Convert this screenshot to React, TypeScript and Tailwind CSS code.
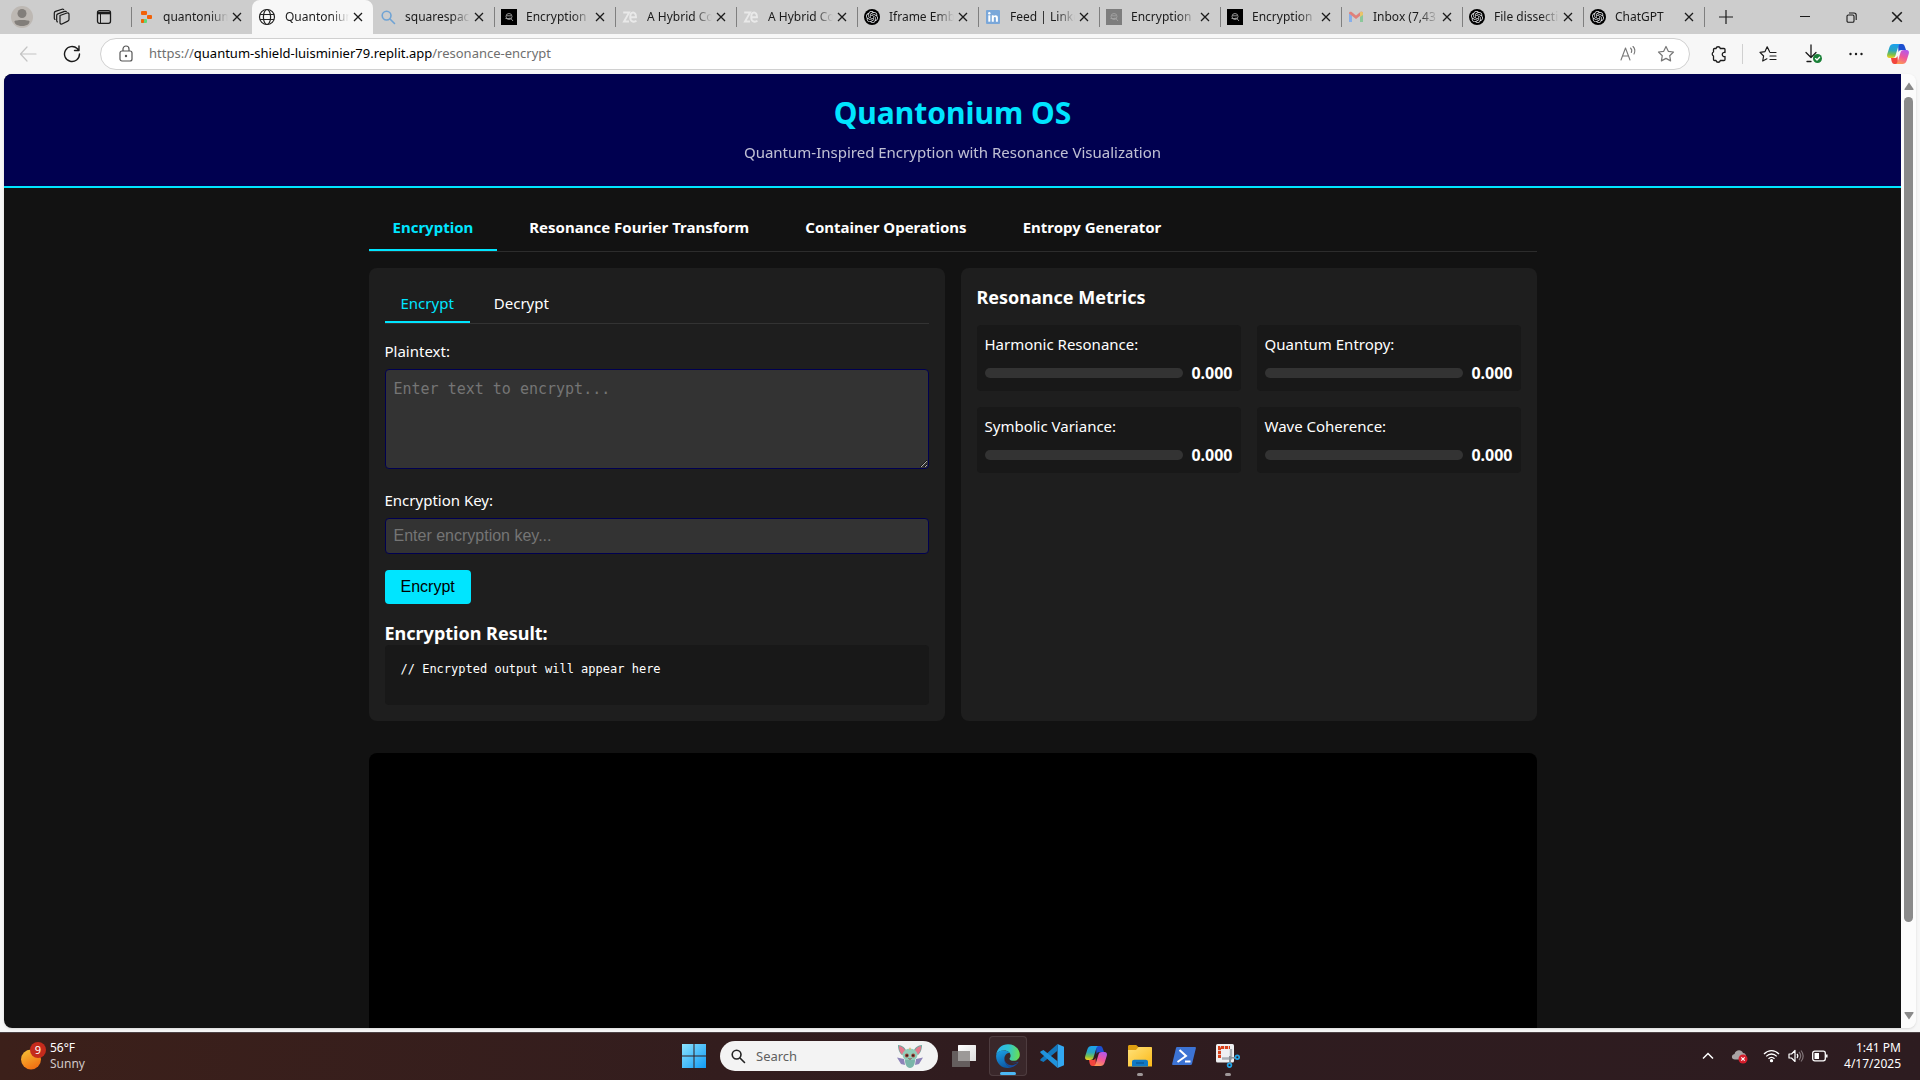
import { useId, useState, type ReactNode } from "react";
import { SiOpenai } from "react-icons/si";

type IconProps = { className?: string };

function OpenAiIcon() {
  return (
    <span className="flex size-4 items-center justify-center rounded-full bg-black text-gray-200">
      <SiOpenai className="size-3" />
    </span>
  );
}

function ReplitIcon() {
  return (
    <svg viewBox="0 0 16 16" className="size-4">
      <rect x="3" y="2" width="6" height="4" rx="1" fill="#f26207" />
      <rect x="9" y="6" width="5" height="4" rx="1" fill="#f26207" />
      <rect x="3" y="10" width="6" height="4" rx="1" fill="#5fd87a" />
      <rect x="3" y="10" width="3" height="4" rx="1" fill="#f26207" />
    </svg>
  );
}

function GlobeIcon() {
  return (
    <svg viewBox="0 0 18 18" className="size-[18px]" fill="none" stroke="#222" strokeWidth="1.2">
      <circle cx="9" cy="9" r="7.5" />
      <ellipse cx="9" cy="9" rx="3.6" ry="7.5" />
      <path d="M2 6.5h14M2 11.5h14" />
    </svg>
  );
}

function SearchIcon({ className = "size-4 text-[#6fa3d4]" }: IconProps) {
  return (
    <svg viewBox="0 0 16 16" className={className} fill="none" stroke="currentColor" strokeWidth="1.6" strokeLinecap="round">
      <circle cx="6.6" cy="6.6" r="4.4" />
      <path d="m10 10 4.5 4.5" />
    </svg>
  );
}

function QIcon({ className }: IconProps) {
  return (
    <svg viewBox="0 0 16 16" className={className}>
      <rect width="16" height="16" fill="currentColor" />
      <g fill="none" stroke="#a3a3a3" strokeWidth="0.9">
        <circle cx="8" cy="7.5" r="3" />
        <path d="M4.5 9.5h5M9 8.5l3 3.5M5.5 6.8h4.5" />
      </g>
    </svg>
  );
}

function ZeIcon() {
  return (
    <svg viewBox="0 0 16 16" className="size-4" fill="none" stroke="#e9e9e9" strokeWidth="1.9">
      <path d="M1.2 3.500h6L2 12.500h5" />
      <path d="M8.600 8.200h5.400c0-6.500-5.800-6-5.800 0 0 5.200 4.500 5.200 6.200 3.400" />
    </svg>
  );
}

function LinkedInIcon() {
  return (
    <svg viewBox="0 0 16 16" className="size-4">
      <rect x="1" y="1" width="14" height="14" rx="1" fill="#7aa7d9" />
      <g fill="#fff">
        <circle cx="4.3" cy="4.3" r="1.2" />
        <rect x="3.3" y="6.3" width="2" height="6.4" />
        <path d="M6.800 6.300h1.900v.9c1-1.500 4.200-1.400 4.200 1.500v4h-2V9.300c0-1.800-2.100-1.600-2.100 0v3.400h-2z" />
      </g>
    </svg>
  );
}

function GmailIcon() {
  return (
    <svg viewBox="0 0 16 16" className="size-4">
      <path d="M1 4v9h3V6.500z" fill="#86aeea" />
      <path d="M15 4v9h-3V6.500z" fill="#8bc79a" />
      <path d="M1 4.500C1 2.600 3 2.600 4 3.300l4 3.200 4-3.200c1-.7 3-.7 3 1.200L8 10z" fill="#e0807a" />
      <path d="M12 3.300c1-.7 3-.7 3 1.200V6l-3 2z" fill="#e9c46a" />
    </svg>
  );
}

function CopilotIcon({ className }: IconProps) {
  const id = useId();
  return (
    <svg viewBox="0 0 24 24" className={className}>
      <defs>
        <linearGradient id={`${id}a`} x1="0.4" y1="0" x2="0.3" y2="1">
          <stop offset="0" stopColor="#1ba0ee" />
          <stop offset="0.45" stopColor="#2aa6c0" />
          <stop offset="0.75" stopColor="#7cc04a" />
          <stop offset="1" stopColor="#f4d020" />
        </linearGradient>
        <linearGradient id={`${id}b`} x1="0.7" y1="0" x2="0.3" y2="1">
          <stop offset="0" stopColor="#b457ec" />
          <stop offset="0.5" stopColor="#f0569a" />
          <stop offset="1" stopColor="#fd9a52" />
        </linearGradient>
      </defs>
      <path d="M12 2h4c1.800 0 2.400 1.200 2.900 2.800L20 8h-4.500c-1.800 0-2.500.7-3 2.300z" fill="#1c4fd0" />
      <path d="M12 22H8.500c-1.800 0-2.400-1.200-2.900-2.800L5 16h3.500c1.800 0 2.500-.7 3-2.300z" fill="#f2453d" />
      <path d="M7.500 2h7c-1.300.3-1.900 1.300-2.400 3L9.500 13.500C9 15.200 8 16 6 16H3.500C1.500 16 .6 14.400 1.200 12.200L3.500 5C4.200 2.900 5.500 2 7.500 2z" fill={`url(#${id}a)`} />
      <path d="M16.500 22h-7c1.300-.3 1.900-1.300 2.400-3l2.600-8.500C15 8.800 16 8 18 8h2.500c2 0 2.900 1.600 2.300 3.800L20.500 19c-.7 2.100-2 3-4 3z" fill={`url(#${id}b)`} />
    </svg>
  );
}

function CloseGlyph({ className = "size-[10px]" }: IconProps) {
  return (
    <svg viewBox="0 0 10 10" className={className} fill="none" stroke="#1b1b1b" strokeWidth="1.3">
      <path d="m1 1 8 8M9 1 1 9" />
    </svg>
  );
}

type BrowserTab = { title: string; icon: ReactNode; active?: boolean };

const browserTabs: BrowserTab[] = [
  { title: "quantonium", icon: <ReplitIcon /> },
  { title: "Quantonium", icon: <GlobeIcon />, active: true },
  { title: "squarespac", icon: <SearchIcon /> },
  { title: "Encryption", icon: <QIcon className="size-4 text-black" /> },
  { title: "A Hybrid Co", icon: <ZeIcon /> },
  { title: "A Hybrid Co", icon: <ZeIcon /> },
  { title: "Iframe Emb", icon: <OpenAiIcon /> },
  { title: "Feed | Linke", icon: <LinkedInIcon /> },
  { title: "Encryption", icon: <QIcon className="size-4 text-[#7d7d7d]" /> },
  { title: "Encryption", icon: <QIcon className="size-4 text-black" /> },
  { title: "Inbox (7,43", icon: <GmailIcon /> },
  { title: "File dissecti", icon: <OpenAiIcon /> },
  { title: "ChatGPT", icon: <OpenAiIcon /> },
];

function TabStrip() {
  return (
    <div className="flex h-[34px] items-stretch bg-[#cdcdcd] text-xs text-[#1b1b1b]">
      <div className="flex w-[131px] shrink-0 items-center pl-[11px]">
        <button aria-label="Profile" className="size-[22px]">
          <svg viewBox="0 0 22 22">
            <circle cx="11" cy="11" r="11" fill="#bdb8b3" />
            <circle cx="11" cy="7.5" r="4.5" fill="#827e7a" />
            <path d="M3.500 15.500c0-2 15-2 15 0 0 6-15 6-15 0z" fill="#827e7a" />
          </svg>
        </button>
        <button aria-label="Workspaces" className="ml-5">
          <svg viewBox="0 0 18 18" className="size-[18px]" fill="none" stroke="#1b1b1b" strokeWidth="1.2" strokeLinejoin="round">
            <path d="m7 7.500 7-2.500c1-.3 2 .2 2 1.200v5.300c0 .8-.4 1.300-1.200 1.600L9 16c-1 .3-2-.2-2-1.200z" />
            <path d="M5 14c-.8 0-1.300-.5-1.300-1.300V7.500c0-.8.400-1.300 1.200-1.600l6.600-2.500c1-.3 1.800 0 2 .8" />
            <path d="M2.500 11.500c-.8 0-1.200-.5-1.200-1.300V5c0-.8.400-1.300 1.200-1.600L9 1.200c.9-.3 1.700 0 1.900.8" />
          </svg>
        </button>
        <button aria-label="Tab actions" className="ml-[25px]">
          <svg viewBox="0 0 16 16" className="size-4" fill="none" stroke="#1b1b1b" strokeWidth="1.3">
            <rect x="1.5" y="1.7" width="13" height="12.6" rx="2" />
            <path d="M1.500 4h13" strokeWidth="2.6" />
            <path d="M4.500 4v10" strokeWidth="1" />
          </svg>
        </button>
      </div>
      <div role="tablist" aria-label="Open tabs" className="flex min-w-0 shrink">
        {browserTabs.map((tab, i) => (
          <div
            key={i}
            className={
              tab.active
                ? "flex w-[121px] min-w-0 items-center rounded-t-lg bg-[#f7f7f7] pr-[10px] pl-[6px]"
                : "flex w-[121px] min-w-0 items-center pr-[10px]"
            }
          >
            {!tab.active && (
              <span className={i === 2 ? "h-5 w-px shrink-0" : "h-5 w-px shrink-0 bg-[#7f7f7f]"} />
            )}
            <button role="tab" aria-selected={!!tab.active} className="flex min-w-0 flex-1 items-center text-left">
              <span className={tab.active ? "shrink-0" : "ml-[6px] shrink-0"}>{tab.icon}</span>
              <span className="ml-[9px] min-w-0 flex-1 overflow-hidden whitespace-nowrap [mask-image:linear-gradient(to_right,black_72%,transparent)]">
                {tab.title}
              </span>
            </button>
            <button aria-label={`Close ${tab.title}`} className="ml-1 shrink-0">
              <CloseGlyph />
            </button>
          </div>
        ))}
      </div>
      <span className="h-5 w-px shrink-0 self-center bg-[#7f7f7f]" />
      <button aria-label="New tab" className="ml-[14px] shrink-0">
        <svg viewBox="0 0 14 14" className="size-[14px]" stroke="#1b1b1b" strokeWidth="1.2">
          <path d="M7 0v14M0 7h14" />
        </svg>
      </button>
      <div className="ml-auto flex shrink-0">
        <button aria-label="Minimize" className="flex w-[46px] items-center justify-center">
          <svg viewBox="0 0 10 10" className="size-[10px]" stroke="#1b1b1b">
            <path d="M0 4.500h10" />
          </svg>
        </button>
        <button aria-label="Restore" className="flex w-[46px] items-center justify-center">
          <svg viewBox="0 0 11 11" className="size-[11px]" fill="none" stroke="#1b1b1b" strokeWidth="1.1">
            <rect x="1" y="3" width="7" height="7.2" rx="1.3" />
            <path d="M3 1h5c1.300 0 2.200.9 2.200 2.200V8" />
          </svg>
        </button>
        <button aria-label="Close window" className="flex w-[46px] items-center justify-center">
          <CloseGlyph className="size-3" />
        </button>
      </div>
    </div>
  );
}

function StarIcon({ className, lines }: IconProps & { lines?: boolean }) {
  return (
    <svg viewBox="0 0 18 18" className={className} fill="none" stroke="currentColor" strokeWidth="1.2" strokeLinejoin="round" strokeLinecap="round">
      {lines ? (
        <>
          <path d="m10.500 6.500-2.300-4.700L6 6.600l-5 .7L4.600 11l-.9 5 4.200-2.200" />
          <path d="M11 7.500h6M11 11h6M11 14.500h6" />
        </>
      ) : (
        <path d="m9 1.500 2.300 4.800 5.200.7-3.800 3.700.9 5.200L9 13.400l-4.600 2.500.9-5.200L1.500 7l5.200-.7z" />
      )}
    </svg>
  );
}

function AddressRow() {
  return (
    <div className="flex h-10 items-center bg-[#f7f7f7] text-[#1b1b1b]">
      <button aria-label="Back" className="ml-[19px] text-[#c4c4c4]">
        <svg viewBox="0 0 18 18" className="size-[18px]" fill="none" stroke="currentColor" strokeWidth="1.2" strokeLinecap="round" strokeLinejoin="round">
          <path d="M17 9H1.500M8 2 1.500 9 8 16" />
        </svg>
      </button>
      <button aria-label="Refresh" className="ml-[26px]">
        <svg viewBox="0 0 18 18" className="size-[18px]" fill="none" stroke="currentColor" strokeWidth="1.4" strokeLinecap="round" strokeLinejoin="round">
          <path d="M16.500 9a7.500 7.500 0 1 1-2.300-5.400L16 5.500M16 1v4.500h-4.500" />
        </svg>
      </button>
      <div className="ml-[19px] flex h-8 min-w-0 flex-1 items-center rounded-full border border-[#d0d0d0] bg-white pr-3 pl-[18px]">
        <svg viewBox="0 0 14 18" className="h-[18px] w-[14px] shrink-0" fill="none" stroke="#555" strokeWidth="1.2">
          <rect x="1" y="6" width="12" height="10" rx="2" />
          <path d="M4 6V4a3 3 0 0 1 6 0v2" />
          <circle cx="7" cy="11" r="0.6" fill="#555" />
        </svg>
        <p className="ml-4 min-w-0 flex-1 truncate text-[13px] text-[#6f6f6f]">
          https://<span className="text-black">quantum-shield-luisminier79.replit.app</span>/resonance-encrypt
        </p>
        <button aria-label="Read aloud" className="ml-4 text-[#777]">
          <svg viewBox="0 0 18 18" className="size-[18px]" fill="none" stroke="currentColor" strokeWidth="1.1" strokeLinecap="round" strokeLinejoin="round">
            <path d="m2 15 4.500-12L11 15M3.500 11h6M11.500 3c1.300 1.200 1.500 3 .8 4.500M14 1.500c2 2 2.200 5 1 7.500" />
          </svg>
        </button>
        <button aria-label="Add to favorites" className="mr-[2px] ml-5 text-[#777]">
          <StarIcon className="size-[18px]" />
        </button>
      </div>
      <button aria-label="Extensions" className="ml-5">
        <svg viewBox="0 0 18 18" className="size-[18px]" fill="none" stroke="currentColor" strokeWidth="1.3" strokeLinejoin="round">
          <path d="M6 3.500a2.200 2.200 0 0 1 4.300 0H14c.6 0 1 .4 1 1v3a2.100 2.100 0 1 0 0 4v3c0 .6-.4 1-1 1h-3.700a2.200 2.200 0 0 1-4.300 0H4.500c-.6 0-1-.4-1-1V11a2.200 2.200 0 0 1 0-4V4.500c0-.6.4-1 1-1z" />
        </svg>
      </button>
      <span className="ml-[14px] h-5 w-px bg-[#d0d0d0]" />
      <button aria-label="Favorites" className="ml-4">
        <StarIcon className="size-[18px]" lines />
      </button>
      <button aria-label="Downloads" className="ml-[26px]">
        <svg viewBox="0 0 20 20" className="size-5" fill="none" stroke="currentColor" strokeWidth="1.3" strokeLinecap="round" strokeLinejoin="round">
          <path d="M8 1v12M3 8.500l5 5 5-5M4 17.500h4" />
          <circle cx="14.5" cy="14.5" r="4.5" fill="#1a8038" stroke="none" />
          <path d="m12.500 14.600 1.500 1.400 2.600-2.800" stroke="#fff" />
        </svg>
      </button>
      <button aria-label="Settings and more" className="ml-6">
        <svg viewBox="0 0 18 18" className="size-[18px]" fill="currentColor">
          <circle cx="3.5" cy="9" r="1.2" />
          <circle cx="9" cy="9" r="1.2" />
          <circle cx="14.5" cy="9" r="1.2" />
        </svg>
      </button>
      <button aria-label="Copilot" className="mr-[10px] ml-[21px]">
        <CopilotIcon className="size-6" />
      </button>
    </div>
  );
}

const sections = ["Encryption", "Resonance Fourier Transform", "Container Operations", "Entropy Generator"];
const metrics = ["Harmonic Resonance:", "Quantum Entropy:", "Symbolic Variance:", "Wave Coherence:"];

function EncryptionPanel() {
  const [mode, setMode] = useState("Encrypt");
  return (
    <section className="rounded-lg bg-[#1e1e1e] p-4">
      <div role="tablist" className="flex gap-2 border-b border-[#333]">
        {["Encrypt", "Decrypt"].map((name) => (
          <button
            key={name}
            role="tab"
            aria-selected={mode === name}
            onClick={() => setMode(name)}
            className={
              mode === name
                ? "h-[39px] border-b-2 border-[#00e5ff] px-4 pt-[2px] text-[#00e5ff]"
                : "h-[39px] border-b-2 border-transparent px-4 pt-[2px]"
            }
          >
            {name}
          </button>
        ))}
      </div>
      <label htmlFor="plaintext" className="mt-4 block leading-[22px]">
        Plaintext:
      </label>
      <textarea
        id="plaintext"
        placeholder="Enter text to encrypt..."
        className="mt-[7px] block h-[100px] w-full resize-y rounded-sm border border-[#000050] bg-[#333] px-2 py-[9px] font-[DejaVu_Sans_Mono,monospace] text-[15px] leading-5 text-white placeholder:text-[#757575]"
      />
      <label htmlFor="key" className="mt-5 block leading-[22px]">
        Encryption Key:
      </label>
      <input
        id="key"
        type="text"
        placeholder="Enter encryption key..."
        className="mt-[7px] block h-9 w-full rounded-sm border border-[#000050] bg-[#333] px-2 font-[Liberation_Sans,sans-serif] text-base text-white placeholder:text-[#757575]"
      />
      <button className="mt-4 h-[34px] rounded-sm bg-[#00e5ff] px-4 font-[Liberation_Sans,sans-serif] text-base text-black">
        Encrypt
      </button>
      <h2 className="mt-[18px] text-lg leading-[23px] font-bold">Encryption Result:</h2>
      <pre className="min-h-[60px] overflow-x-auto rounded-sm bg-[#181818] p-4 font-[DejaVu_Sans_Mono,monospace] text-xs leading-4">
        // Encrypted output will appear here
      </pre>
    </section>
  );
}

function MetricsPanel() {
  return (
    <section className="rounded-lg bg-[#1e1e1e] p-4">
      <h2 className="text-lg leading-[27px] font-bold">Resonance Metrics</h2>
      <div className="mt-[14px] grid grid-cols-2 gap-4">
        {metrics.map((name) => (
          <div key={name} className="rounded-sm bg-[#181818] p-2">
            <p className="leading-[22px]">{name}</p>
            <div className="mt-2 flex items-center gap-2">
              <div role="meter" aria-label={name} aria-valuenow={0} className="h-[10px] flex-1 rounded-full bg-[#333]" />
              <span className="text-base leading-5 font-bold">0.000</span>
            </div>
          </div>
        ))}
      </div>
    </section>
  );
}

function QuantoniumPage() {
  const [section, setSection] = useState("Encryption");
  return (
    <div className="min-w-0 flex-1 overflow-hidden bg-[#121212] text-[15px] text-white">
      <header className="border-b-2 border-[#00e5ff] bg-[#000050] px-4 pt-4 pb-[22px] text-center">
        <h1 className="text-[30px] leading-[46px] font-bold text-[#00e5ff]">Quantonium OS</h1>
        <p className="mt-1 leading-6 opacity-75">Quantum-Inspired Encryption with Resonance Visualization</p>
      </header>
      <main className="mx-auto max-w-[1200px] p-4">
        <nav role="tablist" className="flex gap-2 border-b border-[#2c2c2c]">
          {sections.map((name) => (
            <button
              key={name}
              role="tab"
              aria-selected={section === name}
              onClick={() => setSection(name)}
              className={
                section === name
                  ? "h-[47px] border-b-2 border-[#00e5ff] px-6 pt-[2px] font-bold text-[#00e5ff]"
                  : "h-[47px] border-b-2 border-transparent px-6 pt-[2px] font-bold"
              }
            >
              {name}
            </button>
          ))}
        </nav>
        <div className="mt-4 grid grid-cols-2 gap-4">
          <EncryptionPanel />
          <MetricsPanel />
        </div>
        <div className="mt-8 h-[400px] rounded-lg bg-black" />
      </main>
    </div>
  );
}

function Scrollbar() {
  return (
    <div className="flex w-[15px] shrink-0 flex-col items-center bg-[#fcfcfc] text-[#8a8a8a]">
      <svg viewBox="0 0 10 8" className="mt-2 h-2 w-[10px]" fill="currentColor">
        <path d="M5 .5 9.500 7c.2.600 0 1-.5 1H1C.5 8 .3 7.600.5 7z" />
      </svg>
      <div className="mt-[7px] h-[86.5%] w-[9px] rounded-full bg-[#8a8a8a]" />
      <svg viewBox="0 0 10 8" className="mt-auto mb-2 h-2 w-[10px]" fill="currentColor">
        <path d="M5 7.500.5 1C.3.400.5 0 1 0h8c.5 0 .7.400.5 1z" />
      </svg>
    </div>
  );
}

function WindowsIcon() {
  return (
    <svg viewBox="0 0 24 24" className="size-6">
      <defs>
        <linearGradient id="win" gradientUnits="userSpaceOnUse" x1="0" y1="0" x2="24" y2="24">
          <stop offset="0" stopColor="#8be3fd" />
          <stop offset="1" stopColor="#109bf5" />
        </linearGradient>
      </defs>
      <path d="M0 0h11.500v11.500H0zM12.500 0H24v11.500H12.500zM0 12.500h11.500V24H0zM12.500 12.500H24V24H12.500z" fill="url(#win)" />
    </svg>
  );
}

function CritterIcon() {
  return (
    <svg viewBox="0 0 26 24" className="h-6 w-[26px]">
      <path d="M7 15 0 13.500 4 20l4 1zM19 15l7-1.500-4 6.500-4 1z" fill="#8d83b8" />
      <path d="M1 1c4 0 8 3 8.500 7L5 11C2 9 1 4 1 1zM25 1c-4 0-8 3-8.500 7l4.500 3c3-2 4-7 4-10z" fill="#6fa69d" />
      <path d="M2 2C5 2.500 8 5 8.500 8l-3.500 2.500C2.500 8 2 5 2 2zM24 2c-3 .5-6 3-6.500 6l3.500 2.500C23.500 8 24 5 24 2z" fill="#e5788c" />
      <ellipse cx="13" cy="11" rx="7.5" ry="6.5" fill="#92cdb9" />
      <path d="M8 16h10c0 4-1.500 8-5 8s-5-4-5-8z" fill="#7ab5a8" />
      <circle cx="9.8" cy="11.5" r="1.9" fill="#a44438" />
      <circle cx="16.2" cy="11.5" r="1.9" fill="#a44438" />
      <circle cx="10" cy="11.5" r="0.9" fill="#281a1e" />
      <circle cx="16" cy="11.5" r="0.9" fill="#281a1e" />
      <path d="M11.500 14.500c1 .8 2 .8 3 0" fill="none" stroke="#8b3f45" />
      <path d="M12 5.500 13 3l1 2.500z" fill="#e1b25c" />
    </svg>
  );
}

function TaskViewIcon() {
  return (
    <svg viewBox="0 0 24 24" className="size-6">
      <defs>
        <linearGradient id="tv" x1="0" y1="0" x2="1" y2="1">
          <stop offset="0" stopColor="#fff" />
          <stop offset="1" stopColor="#dcdcdc" />
        </linearGradient>
      </defs>
      <rect x="6" y="1" width="18" height="16" rx="0.5" fill="url(#tv)" />
      <rect x="0" y="7" width="18" height="16" rx="0.5" fill="#6b6665" fillOpacity="0.9" />
      <path d="M6 7h12v10H6z" fill="#9c9998" />
    </svg>
  );
}

function EdgeIcon() {
  return (
    <svg viewBox="0 0 24 24" className="size-6">
      <defs>
        <linearGradient id="edgeTop" x1="0" y1="0.5" x2="1" y2="0.6">
          <stop offset="0" stopColor="#2bb4ee" />
          <stop offset="0.5" stopColor="#30c5cf" />
          <stop offset="1" stopColor="#6be04c" />
        </linearGradient>
        <linearGradient id="edgeBody" x1="0.2" y1="0" x2="0.5" y2="1">
          <stop offset="0" stopColor="#1b9de2" />
          <stop offset="1" stopColor="#0c59a4" />
        </linearGradient>
      </defs>
      <path d="M.2 10.500C1.200 4.200 6 .2 12 .2c6.800 0 11.800 4.800 11.800 10.500 0 3.600-2.700 6.100-6 6.100-2.800 0-4.300-1.100-4.300-2.100 0-.7 1.100-1.100 1.100-3C14.600 9 12 6.500 8.200 6.500c-3.700 0-6.800 1.600-8 4z" fill="url(#edgeTop)" />
      <path d="M.1 12C.300 8.300 4 6.400 8.200 6.500c2.200 0 4.400 1 5.400 2.300-3 .2-5.200 2.700-5.200 6 0 4.200 3 7.800 7.300 8.500C8 26 0 20.500.1 12z" fill="url(#edgeBody)" />
      <path d="M8.800 12.500c-1.200 5.500 3.200 9.700 8.700 8.500 1.900-.5 3.500-1.400 4.700-2.500.5-.5.200-.9-.5-.6-6.500 2.600-12-.4-12.900-5.400zm13.400 6C20.300 21.500 18 22.800 15.700 23.300 10 22.500 7.300 16.800 8.800 12.500c1 5 6.300 8 13.400 6z" fill="#174c9f" />
    </svg>
  );
}

function CodeIcon() {
  return (
    <svg viewBox="0 0 24 24" className="size-6">
      <path d="M17.500 0 24 2.800v18.400L17.500 24z" fill="#32a8f2" />
      <path d="M17.500 0v6.700L3.500 18 .8 16.800c-.7-.4-.7-1.300-.1-1.800z" fill="#1277bd" />
      <path d="M17.500 24v-6.700L3.500 6 .8 7.200c-.7.4-.7 1.300-.1 1.800z" fill="#2093dc" />
    </svg>
  );
}

function FolderIcon() {
  return (
    <svg viewBox="0 0 24 24" className="size-6">
      <defs>
        <linearGradient id="folder" x1="0" y1="0" x2="1" y2="1">
          <stop offset="0" stopColor="#ffe27a" />
          <stop offset="1" stopColor="#fbb919" />
        </linearGradient>
      </defs>
      <path d="M0 2.500C0 1.600.6 1 1.500 1h6.700L11 3.500h12V10H0z" fill="#dfa011" />
      <path d="M0 6h8l2.500-3H23c.6 0 1 .4 1 1v18.500H0z" fill="url(#folder)" />
      <path d="M4 22.500V18c0-1.400.9-2.300 2.300-2.300h11.400c1.400 0 2.300.9 2.300 2.300v4.500z" fill="#1079c4" />
      <path d="M8 19h8" stroke="#0c5a99" strokeWidth="1.5" />
    </svg>
  );
}

function PowerShellIcon() {
  return (
    <svg viewBox="0 0 24 24" className="size-6">
      <path d="M5 3h18c.8 0 1.100.5.9 1.300L20 20c-.2.700-.7 1-1.400 1H1C.2 21 0 20.500.2 19.800L4 4c.2-.7.500-1 1-1z" fill="#3c73d4" />
      <path d="m7.500 6 6.500 6-8.500 6M13 17.500h5.500" fill="none" stroke="#fff" strokeWidth="2" />
    </svg>
  );
}

function SnipIcon() {
  return (
    <svg viewBox="0 0 24 24" className="size-6">
      <rect width="18" height="18.5" rx="1.5" fill="#eef0f2" />
      <path d="M3.500 14V3.500H14" fill="none" stroke="#d8401a" strokeWidth="3" strokeDasharray="3.2 0.8" />
      <path d="M15 5v9.500H6" fill="none" stroke="#a9afb5" strokeWidth="2.4" />
      <path d="m13 13 7 1M14 12v8" stroke="#8b9298" strokeWidth="2" />
      <circle cx="21.3" cy="13.3" r="1.9" fill="none" stroke="#22a5e8" strokeWidth="1.7" />
      <circle cx="13.5" cy="21.3" r="1.9" fill="none" stroke="#22a5e8" strokeWidth="1.7" />
    </svg>
  );
}

type TaskbarApp = { name: string; icon: ReactNode; state?: "active" | "open" };

const apps: TaskbarApp[] = [
  { name: "Task view", icon: <TaskViewIcon /> },
  { name: "Microsoft Edge", icon: <EdgeIcon />, state: "active" },
  { name: "Visual Studio Code", icon: <CodeIcon /> },
  { name: "Copilot", icon: <CopilotIcon className="size-6" /> },
  { name: "File Explorer", icon: <FolderIcon />, state: "open" },
  { name: "PowerShell", icon: <PowerShellIcon /> },
  { name: "Snipping Tool", icon: <SnipIcon />, state: "open" },
];

function Taskbar() {
  return (
    <footer className="grid h-12 shrink-0 grid-cols-[1fr_auto_1fr] items-center border-t border-[#4d4245] bg-linear-to-r from-[#3c201a] via-[#301c1f] to-[#2d1c20] pb-[2px] text-xs leading-4 text-white">
      <button className="flex items-center justify-self-start pl-5 text-left">
        <svg viewBox="0 0 26 28" className="h-7 w-[26px]">
          <defs>
            <linearGradient id="sun" x1="0.2" y1="0" x2="0.7" y2="1">
              <stop offset="0" stopColor="#f6bf35" />
              <stop offset="1" stopColor="#f26b10" />
            </linearGradient>
          </defs>
          <circle cx="11" cy="17.5" r="10" fill="url(#sun)" />
          <circle cx="18" cy="8" r="8" fill="#c42b1c" />
          <text x="18" y="12" textAnchor="middle" fill="#fff" fontSize="11" fontFamily="Noto Sans">
            9
          </text>
        </svg>
        <span className="ml-1">
          <span className="block">56°F</span>
          <span className="block text-[#d0c8c8]">Sunny</span>
        </span>
      </button>
      <div className="flex items-center pl-3">
        <button aria-label="Start">
          <WindowsIcon />
        </button>
        <label className="mr-1 ml-[14px] flex h-[30px] w-[218px] items-center rounded-full bg-[#f3f3f3] pr-[15px] pl-[10px] text-[#333]">
          <SearchIcon className="size-4 text-[#222]" />
          <input
            type="search"
            aria-label="Search"
            placeholder="Search"
            className="ml-[10px] min-w-0 flex-1 bg-transparent text-[13px] placeholder:text-[#5f5f5f]"
          />
          <CritterIcon />
        </label>
        {apps.map((app) => (
          <button
            key={app.name}
            aria-label={app.name}
            className={
              app.state === "active"
                ? "relative mx-[3px] flex h-10 w-[38px] items-center justify-center rounded-sm border border-white/10 bg-white/5"
                : "relative flex h-10 w-11 items-center justify-center"
            }
          >
            {app.icon}
            {app.state === "active" && <span className="absolute bottom-0 h-[3px] w-4 rounded-full bg-[#4cb8f5]" />}
            {app.state === "open" && <span className="absolute bottom-0 h-[3px] w-[6px] rounded-full bg-[#9f9798]" />}
          </button>
        ))}
      </div>
      <div className="flex items-center justify-self-end pr-[19px]">
        <button aria-label="Show hidden icons">
          <svg viewBox="0 0 12 8" className="h-2 w-3" fill="none" stroke="#fff" strokeWidth="1.5">
            <path d="m1 6.500 5-5 5 5" />
          </svg>
        </button>
        <button aria-label="OneDrive" className="ml-[17px]">
          <svg viewBox="0 0 18 16" className="h-4 w-[18px]">
            <path d="M4 11.500c-4 0-4-5-.5-5.500C4.500 1.500 10.500 1 12 5c3 0 3.500 3 3 6.500z" fill="#a8a3a4" />
            <circle cx="12" cy="11" r="4.5" fill="#d41f2d" />
            <path d="m10.300 9.300 3.400 3.400M13.700 9.300l-3.400 3.400" stroke="#fff" strokeWidth="1.1" />
          </svg>
        </button>
        <button aria-label="Network, volume and battery" className="ml-[14px] flex items-center gap-2">
          <svg viewBox="0 0 17 14" className="h-[14px] w-[17px]" fill="none" stroke="#fff" strokeWidth="1.3">
            <path d="M1 5c4.500-4.500 10.500-4.500 15 0M3.200 7.400c3.200-3.200 7.400-3.200 10.600 0M5.500 9.700c1.900-1.900 4.100-1.900 6 0" />
            <circle cx="8.5" cy="11.7" r="1" fill="#fff" />
          </svg>
          <svg viewBox="0 0 16 14" className="h-[14px] w-4" fill="none" stroke="#fff" strokeWidth="1.2" strokeLinejoin="round">
            <path d="M1 5h2.500L7 1.500v11L3.500 9H1zM9 5c1 1.200 1 2.800 0 4" />
            <path d="M11 3c2 2.400 2 5.600 0 8M13 1.500c2.700 3.400 2.700 7.600 0 11" stroke="#817578" />
          </svg>
          <svg viewBox="0 0 16 12" className="h-3 w-4">
            <rect x="0.7" y="1.2" width="12.6" height="9.6" rx="2" fill="none" stroke="#fff" strokeWidth="1.3" />
            <rect x="2.5" y="3" width="4.5" height="6" fill="#fff" />
            <path d="M14.800 4.500v3" stroke="#fff" strokeWidth="1.5" />
          </svg>
        </button>
        <button className="ml-4 text-right">
          <time className="block">1:41 PM</time>
          <time className="block">4/17/2025</time>
        </button>
      </div>
    </footer>
  );
}

export default function App() {
  return (
    <div className="flex h-screen flex-col overflow-hidden bg-[#f7f7f7] font-['Noto_Sans',sans-serif]">
      <TabStrip />
      <AddressRow />
      <div className="mx-1 mb-1 flex min-h-0 flex-1 overflow-hidden rounded-lg shadow-sm">
        <QuantoniumPage />
        <Scrollbar />
      </div>
      <Taskbar />
    </div>
  );
}
